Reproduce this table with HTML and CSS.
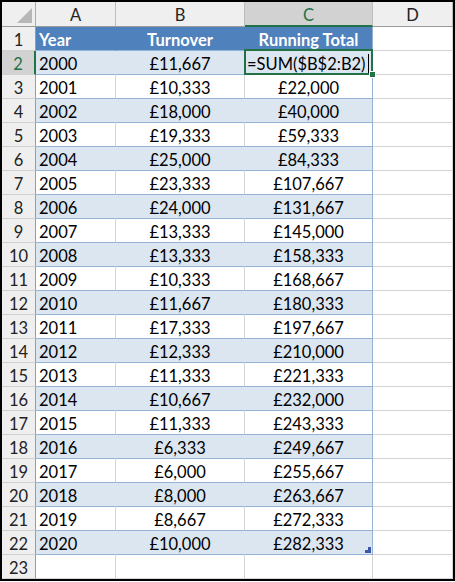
FILE: index.html
```html
<!DOCTYPE html>
<html>
<head>
<meta charset="utf-8">
<link rel="stylesheet" href="styles.css">
</head>
<body>
<div class="sheet">
  <div class="corner"><span class="tri"></span></div>
  <div class="ch">A</div>
  <div class="ch">B</div>
  <div class="ch sel">C</div>
  <div class="ch">D</div>

  <div class="rh">1</div>
  <div class="th left">Year</div>
  <div class="th">Turnover</div>
  <div class="th last">Running Total</div>
  <div class="blank"></div>

  <div class="rh sel">2</div>
  <div class="td left band">2000</div>
  <div class="td band">£11,667</div>
  <div class="td band last active"><span class="edit">=SUM($B$2:B2)</span><span class="caret"></span><span class="handle"></span></div>
  <div class="blank"></div>

  <div class="rh">3</div><div class="td left">2001</div><div class="td">£10,333</div><div class="td last">£22,000</div><div class="blank"></div>
  <div class="rh">4</div><div class="td left band">2002</div><div class="td band">£18,000</div><div class="td band last">£40,000</div><div class="blank"></div>
  <div class="rh">5</div><div class="td left">2003</div><div class="td">£19,333</div><div class="td last">£59,333</div><div class="blank"></div>
  <div class="rh">6</div><div class="td left band">2004</div><div class="td band">£25,000</div><div class="td band last">£84,333</div><div class="blank"></div>
  <div class="rh">7</div><div class="td left">2005</div><div class="td">£23,333</div><div class="td last">£107,667</div><div class="blank"></div>
  <div class="rh">8</div><div class="td left band">2006</div><div class="td band">£24,000</div><div class="td band last">£131,667</div><div class="blank"></div>
  <div class="rh">9</div><div class="td left">2007</div><div class="td">£13,333</div><div class="td last">£145,000</div><div class="blank"></div>
  <div class="rh">10</div><div class="td left band">2008</div><div class="td band">£13,333</div><div class="td band last">£158,333</div><div class="blank"></div>
  <div class="rh">11</div><div class="td left">2009</div><div class="td">£10,333</div><div class="td last">£168,667</div><div class="blank"></div>
  <div class="rh">12</div><div class="td left band">2010</div><div class="td band">£11,667</div><div class="td band last">£180,333</div><div class="blank"></div>
  <div class="rh">13</div><div class="td left">2011</div><div class="td">£17,333</div><div class="td last">£197,667</div><div class="blank"></div>
  <div class="rh">14</div><div class="td left band">2012</div><div class="td band">£12,333</div><div class="td band last">£210,000</div><div class="blank"></div>
  <div class="rh">15</div><div class="td left">2013</div><div class="td">£11,333</div><div class="td last">£221,333</div><div class="blank"></div>
  <div class="rh">16</div><div class="td left band">2014</div><div class="td band">£10,667</div><div class="td band last">£232,000</div><div class="blank"></div>
  <div class="rh">17</div><div class="td left">2015</div><div class="td">£11,333</div><div class="td last">£243,333</div><div class="blank"></div>
  <div class="rh">18</div><div class="td left band">2016</div><div class="td band">£6,333</div><div class="td band last">£249,667</div><div class="blank"></div>
  <div class="rh">19</div><div class="td left">2017</div><div class="td">£6,000</div><div class="td last">£255,667</div><div class="blank"></div>
  <div class="rh">20</div><div class="td left band">2018</div><div class="td band">£8,000</div><div class="td band last">£263,667</div><div class="blank"></div>
  <div class="rh">21</div><div class="td left">2019</div><div class="td">£8,667</div><div class="td last">£272,333</div><div class="blank"></div>
  <div class="rh">22</div><div class="td left band">2020</div><div class="td band">£10,000</div><div class="td band last resize">£282,333<span class="grip"></span></div><div class="blank"></div>

  <div class="rh">23</div><div class="blank"></div><div class="blank"></div><div class="blank"></div><div class="blank"></div>
</div>
</body>
</html>
```

FILE: styles.css
```css
* { box-sizing: border-box; }
html, body { margin: 0; padding: 0; background: #fff; }

.sheet {
  display: grid;
  grid-template-columns: 34px 80px 129px 128px 80px;
  grid-template-rows: 25px;
  grid-auto-rows: 24px;
  width: 455px;
  border: 2px solid #000;
  font-family: Lato, "Liberation Sans", sans-serif;
  font-size: 16.5px;
  color: #000;
}

.sheet > div {
  border-right: 1px solid #d4d4d4;
  border-bottom: 1px solid #d4d4d4;
  display: flex;
  align-items: center;
  white-space: nowrap;
  padding-top: 2px;
}

.corner {
  background: #efefef;
  border-right: 1px solid #ababab !important;
  border-bottom: 1px solid #9b9b9b !important;
  position: relative;
}
.corner .tri {
  position: absolute;
  right: 3px;
  bottom: 3px;
  width: 15px;
  height: 15px;
  background: #b7b7b7;
  clip-path: polygon(100% 0, 100% 100%, 0 100%);
}

.ch {
  background: #efefef;
  justify-content: center;
  border-right-color: #bdbdbd !important;
  border-bottom: 1px solid #9b9b9b !important;
  color: #222;
}
.ch.sel {
  background: #d2d2d2;
  color: #217346;
  border-bottom: 2px solid #217346 !important;
}

.rh {
  background: #efefef;
  justify-content: center;
  border-right: 1px solid #9b9b9b !important;
  border-bottom-color: #d0d0d0 !important;
  color: #222;
}
.rh.sel {
  background: #d2d2d2;
  color: #217346;
  border-right: 2px solid #217346 !important;
}

.th {
  background: #4f81bd;
  color: #fff;
  font-weight: 700;
  justify-content: center;
  border-right-color: #4f81bd !important;
  border-bottom-color: #95b3d7 !important;
}
.th.left { justify-content: flex-start; padding-left: 3px; }

.td {
  justify-content: center;
  border-bottom-color: #95b3d7 !important;
}
.td.left { justify-content: flex-start; padding-left: 3px; }
.td.band {
  background: #dce6f1;
  border-right-color: #dce6f1 !important;
}
.th.last, .td.last { border-right-color: #95b3d7 !important; }

.active {
  position: relative;
  justify-content: flex-start !important;
  padding-left: 2px;
}
.active::after {
  content: "";
  position: absolute;
  left: -1px;
  top: -2px;
  right: -1px;
  bottom: -1px;
  border: 2px solid #217346;
}
.caret {
  display: inline-block;
  width: 1px;
  height: 19px;
  background: #000;
  margin-left: 2px;
}
.handle {
  position: absolute;
  right: -4px;
  bottom: -4px;
  width: 7px;
  height: 7px;
  background: #217346;
  border: 1px solid #fff;
  z-index: 2;
}

.resize { position: relative; }
.grip {
  position: absolute;
  right: 1px;
  bottom: 1px;
  width: 6px;
  height: 6px;
  background: #3c56a8;
  clip-path: polygon(100% 0, 100% 100%, 0 100%, 0 50%, 50% 50%, 50% 0);
}
```
